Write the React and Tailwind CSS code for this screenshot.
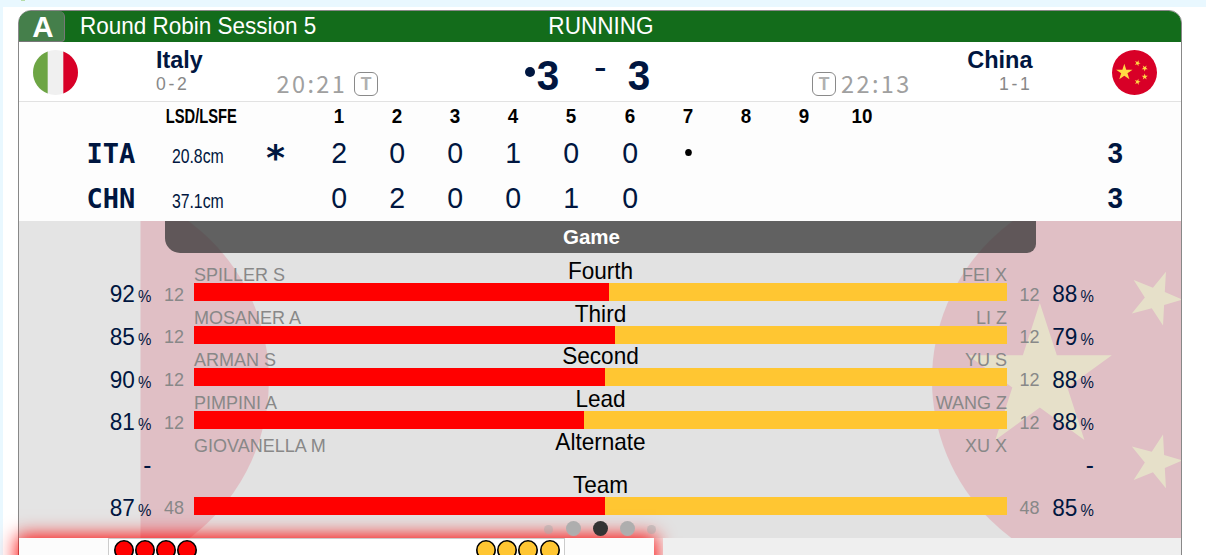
const COUNTERS = ["1", "2", "3", "4", "5", "6", "7", "8", "9", "10"];

const LINES = [
  { code: "ITA", lsd: "20.8cm", hammer: true, ends: ["2", "0", "0", "1", "0", "0"], next: true, total: 3 },
  { code: "CHN", lsd: "37.1cm", hammer: false, ends: ["0", "2", "0", "0", "1", "0"], next: false, total: 3 },
];

const STATS = [
  { position: "Fourth", home: "SPILLER S", away: "FEI X", homePct: 92, awayPct: 88, shots: 12, split: 415 },
  { position: "Third", home: "MOSANER A", away: "LI Z", homePct: 85, awayPct: 79, shots: 12, split: 421 },
  { position: "Second", home: "ARMAN S", away: "YU S", homePct: 90, awayPct: 88, shots: 12, split: 411 },
  { position: "Lead", home: "PIMPINI A", away: "WANG Z", homePct: 81, awayPct: 88, shots: 12, split: 390 },
  { position: "Alternate", home: "GIOVANELLA M", away: "XU X" },
  { position: "Team", home: "", away: "", homePct: 87, awayPct: 85, shots: 48, split: 411 },
];

function ItalyFlag({ className }) {
  return (
    <svg viewBox="0 0 512 512" className={className}>
      <circle cx="256" cy="256" r="256" fill="#F0F0F0" />
      <path d="M345 16 A256 256 0 0 1 345 496 Z" fill="#D80027" />
      <path d="M167 16 A256 256 0 0 0 167 496 Z" fill="#6DA544" />
    </svg>
  );
}

function ChinaFlag({ className }) {
  return (
    <svg viewBox="0 0 512 512" className={className}>
      <circle cx="256" cy="256" r="256" fill="#D80027" />
      <g fill="#FFDA44">
        <polygon points="140.1,155.8 162.2,223.8 233.7,223.8 175.9,265.9 198,333.9 140.1,291.8 82.3,333.9 104.4,265.9 46.6,223.8 118.1,223.8" />
        <polygon points="304,396.8 287.1,376 262.1,385.8 276.6,363.2 259.7,342.4 285.6,349.4 300.2,326.8 301.6,353.6 325.5,360.6 302.5,370.2" />
        <polygon points="350.3,335.4 358.5,309.8 337,293.8 363.8,293.4 372,267.9 380.7,293.3 407.5,292.9 386,308.9 394.7,334.3 372.8,318.9" />
        <polygon points="350.3,176.6 358.5,202.2 337,218.2 363.8,218.6 372,244.1 380.7,218.7 407.5,219.1 386,203.1 394.7,177.7 372.8,193.1" />
        <polygon points="304,115.2 287.1,136 262.1,126.2 276.6,148.8 259.7,169.6 285.6,162.6 300.2,185.2 301.6,158.4 325.5,151.4 302.5,141.8" />
      </g>
    </svg>
  );
}

function TimeoutBadge({ className }) {
  return (
    <span className={`mt-[30px] h-6 w-6 shrink-0 rounded-[6px] border border-[#8a8a8a] text-center text-[17.5px] leading-[23px] font-bold text-[#b0b0b0] ${className}`}>
      T
    </span>
  );
}

function Clock({ time, className }) {
  return (
    <span className={`mt-[29px] shrink-0 font-['Noto_Sans_CJK_JP',sans-serif] text-[23.5px] leading-[24px] tracking-[2.4px] text-[#a0a0a0] ${className}`}>
      {time}
    </span>
  );
}

function Percent({ value, className }) {
  return (
    <div className={`mt-[24.2px] flex h-6 shrink-0 origin-right scale-x-[0.94] items-baseline justify-end gap-[3.5px] leading-[24px] text-[#001640] ${className}`}>
      {value ? (
        <>
          <span className="text-[24px]">{value}</span>
          <span className="text-[16px]">%</span>
        </>
      ) : (
        <span className="text-[26px]">-</span>
      )}
    </div>
  );
}

function StatRow({ stat }) {
  return (
    <div className="flex h-[42.75px]">
      <Percent value={stat.homePct} className="w-[132.5px]" />
      <span className="mt-[24.7px] w-[32.5px] shrink-0 text-right text-[18px] leading-[24px] text-[#888]">{stat.shots}</span>
      <div className="ml-[10px] w-[813px] shrink-0">
        <div className="grid h-[25px] grid-cols-3">
          <span className="text-[18px] leading-[35.8px] text-[#888]">{stat.home}</span>
          <span className="scale-x-[0.94] text-center text-[24px] leading-[26.8px] text-black">{stat.position}</span>
          <span className="text-right text-[18px] leading-[35.8px] text-[#888]">{stat.away}</span>
        </div>
        {stat.split && (
          <div className="relative flex h-[18px] bg-[#ffc632]">
            <div className="bg-[#f00]" style={{ width: stat.split }} />
          </div>
        )}
      </div>
      <span className="mt-[24.7px] ml-[12.5px] w-[32.5px] shrink-0 text-[18px] leading-[24px] text-[#888]">{stat.shots}</span>
      <Percent value={stat.awayPct} className="w-[42px]" />
    </div>
  );
}

function Stones({ color, className }) {
  return (
    <div className={`flex gap-[1.3px] ${className}`}>
      {[0, 1, 2, 3].map((i) => (
        <svg key={i} viewBox="0 0 20 20" className={`h-5 w-5 ${color}`}>
          <circle cx="10" cy="10" r="9.2" stroke="#000" strokeWidth="1.6" />
        </svg>
      ))}
    </div>
  );
}

export default function App() {
  return (
    <div className="h-[555px] w-[1206px] overflow-hidden bg-[#e9f8ff] pl-[3px] font-['Liberation_Sans',Arial,sans-serif]">
      <div className="h-[7px] pl-[18px]">
        <div className="h-px w-[4px] bg-[#b5dca8]" />
      </div>
      <div className="h-[548px] bg-white pt-[3px] pl-[15px]">
        <div className="h-[600px] w-[1164px] rounded-t-[13px] border border-[#888] bg-[#efefef]">
          <div className="flex h-[31px] rounded-t-[12px] bg-[#136c1b] text-[24px] leading-[30px] text-white">
            <span className="w-[46px] rounded-tl-[12px] rounded-tr-[6px] rounded-br-[4px] border-r border-b border-[#777] bg-[#457f4b] pl-[3px] text-center text-[29.5px] leading-[31px] font-bold">
              A
            </span>
            <span className="ml-[15px] w-[452px] origin-left scale-x-[0.937]">Round Robin Session 5</span>
            <span className="ml-px w-[136px] scale-x-[0.94] text-center">RUNNING</span>
          </div>

          <div className="flex h-[60px] items-start border-b border-[#e2e2e2] bg-white text-[#001640]">
            <ItalyFlag className="mt-[8px] ml-[14px] h-[45px] w-[45px] shrink-0" />
            <div className="mt-[5px] ml-[77.5px] w-[121px] shrink-0">
              <div className="origin-left scale-x-[0.97] text-[24px] leading-[26px] font-bold">Italy</div>
              <div className="pl-[0.5px] text-[17.6px] leading-[23px] tracking-[2.7px] text-[#888]">0-2</div>
            </div>
            <Clock time="20:21" className="w-[77.5px]" />
            <TimeoutBadge />
            <span className="mt-[24.5px] ml-[147px] h-[10px] w-[10px] shrink-0 rounded-full bg-[#001640]" />
            <span className="mt-[12.5px] ml-px w-6 shrink-0 scale-x-[0.94] text-[43px] leading-[40px] font-bold">3</span>
            <span className="mt-[5px] ml-[34px] w-[13px] shrink-0 text-[38px] leading-[40px]">-</span>
            <span className="mt-[12.5px] ml-[20px] w-6 shrink-0 scale-x-[0.94] text-[43px] leading-[40px] font-bold">3</span>
            <TimeoutBadge className="ml-[161px]" />
            <Clock time="22:13" className="ml-[5px] w-[75px]" />
            <div className="mt-[5px] w-[116.5px] shrink-0 text-right">
              <div className="origin-right scale-x-[0.98] text-[24px] leading-[26px] font-bold">China</div>
              <div className="text-[17.6px] leading-[23px] tracking-[2.7px] text-[#888]">1-1</div>
            </div>
            <ChinaFlag className="mt-[8px] ml-[79.5px] h-[45px] w-[45px] shrink-0" />
          </div>

          <div className="h-[119px] bg-[#fdfdfd]">
            <div className="flex h-[28.5px] text-[20px] leading-[28px] font-bold text-black">
              <div className="ml-[146px] flex w-[73px] justify-center">
                <span className="scale-x-[0.735]">LSD/LSFE</span>
              </div>
              <div className="ml-[71.9px] flex">
                {COUNTERS.map((n) => (
                  <span key={n} className="w-[58.15px] scale-x-[0.94] text-center">{n}</span>
                ))}
              </div>
            </div>
            {LINES.map((line) => (
              <div key={line.code} className="flex h-[45px] items-baseline text-[30px] leading-[44.5px] text-[#001640]">
                <span className="w-[146px] pl-[67.5px] font-['DejaVu_Sans_Mono',monospace] text-[27px] font-bold">{line.code}</span>
                <div className="flex w-[65.5px] justify-center">
                  <span className="scale-x-[0.79] text-[20px]">{line.lsd}</span>
                </div>
                <span className="w-[79.4px] translate-y-[6.5px] pl-[11px] text-center font-['DejaVu_Sans_Mono',monospace] text-[36px] leading-[30px] font-bold">
                  {line.hammer ? "*" : ""}
                </span>
                {COUNTERS.map((n, i) => (
                  <span key={n} className="w-[58.15px] scale-x-[0.95] text-center">
                    {line.ends[i]}
                    {line.next && i === line.ends.length && (
                      <span className="inline-block h-[7px] w-[7px] rounded-full bg-black align-[7px]" />
                    )}
                  </span>
                ))}
                <span className="ml-auto mr-[57.7px] scale-x-[0.93] font-bold">{line.total}</span>
              </div>
            ))}
          </div>

          <div className="relative h-[317px] overflow-hidden bg-[#e2e2e2]">
            <ItalyFlag className="absolute top-[-38.5px] left-[-144px] h-[394px] w-[394px] opacity-15" />
            <ChinaFlag className="absolute top-[-38.5px] left-[913px] h-[394px] w-[394px] opacity-15" />
            <div className="relative">
              <div className="ml-[146px] h-[32px] w-[871px] rounded-br-[9px] rounded-bl-[15px] bg-[#333]/74 pr-[18px] text-center text-[20.5px] leading-[32px] font-bold text-white">
                Game
              </div>
              <div className="pt-[4.9px]">
                {STATS.map((stat) => (
                  <StatRow key={stat.position} stat={stat} />
                ))}
              </div>
            </div>
          </div>

          <div className="flex h-[60px]">
            <div className="relative flex w-[635px] bg-[#fcfcfc] pl-[89px] shadow-[0_0_18px_2px_#ff0000]">
              <div className="flex w-[457px] justify-between border border-[#ccc] bg-white pt-px">
                <Stones color="fill-[#f00]" className="pl-[4.5px]" />
                <Stones color="fill-[#ffc632]" className="pr-[4.5px]" />
              </div>
              {/* carousel pager, sits above the panel glow */}
              <div className="absolute -top-[17px] left-[525px] flex items-center">
                <span className="mt-px h-[9px] w-[9px] rounded-full bg-[#aaa]/50" />
                <span className="ml-[12.5px] h-[15px] w-[15px] rounded-full bg-[#aeaeae]" />
                <span className="ml-[12px] h-[15px] w-[15px] rounded-full bg-[#333]" />
                <span className="ml-[12px] h-[15px] w-[15px] rounded-full bg-[#aeaeae]" />
                <span className="mt-px ml-[12.5px] h-[9px] w-[9px] rounded-full bg-[#aaa]/50" />
              </div>
            </div>
            <div className="relative ml-[9px] flex-1 bg-[#efefef]" />
          </div>
        </div>
      </div>
    </div>
  );
}
